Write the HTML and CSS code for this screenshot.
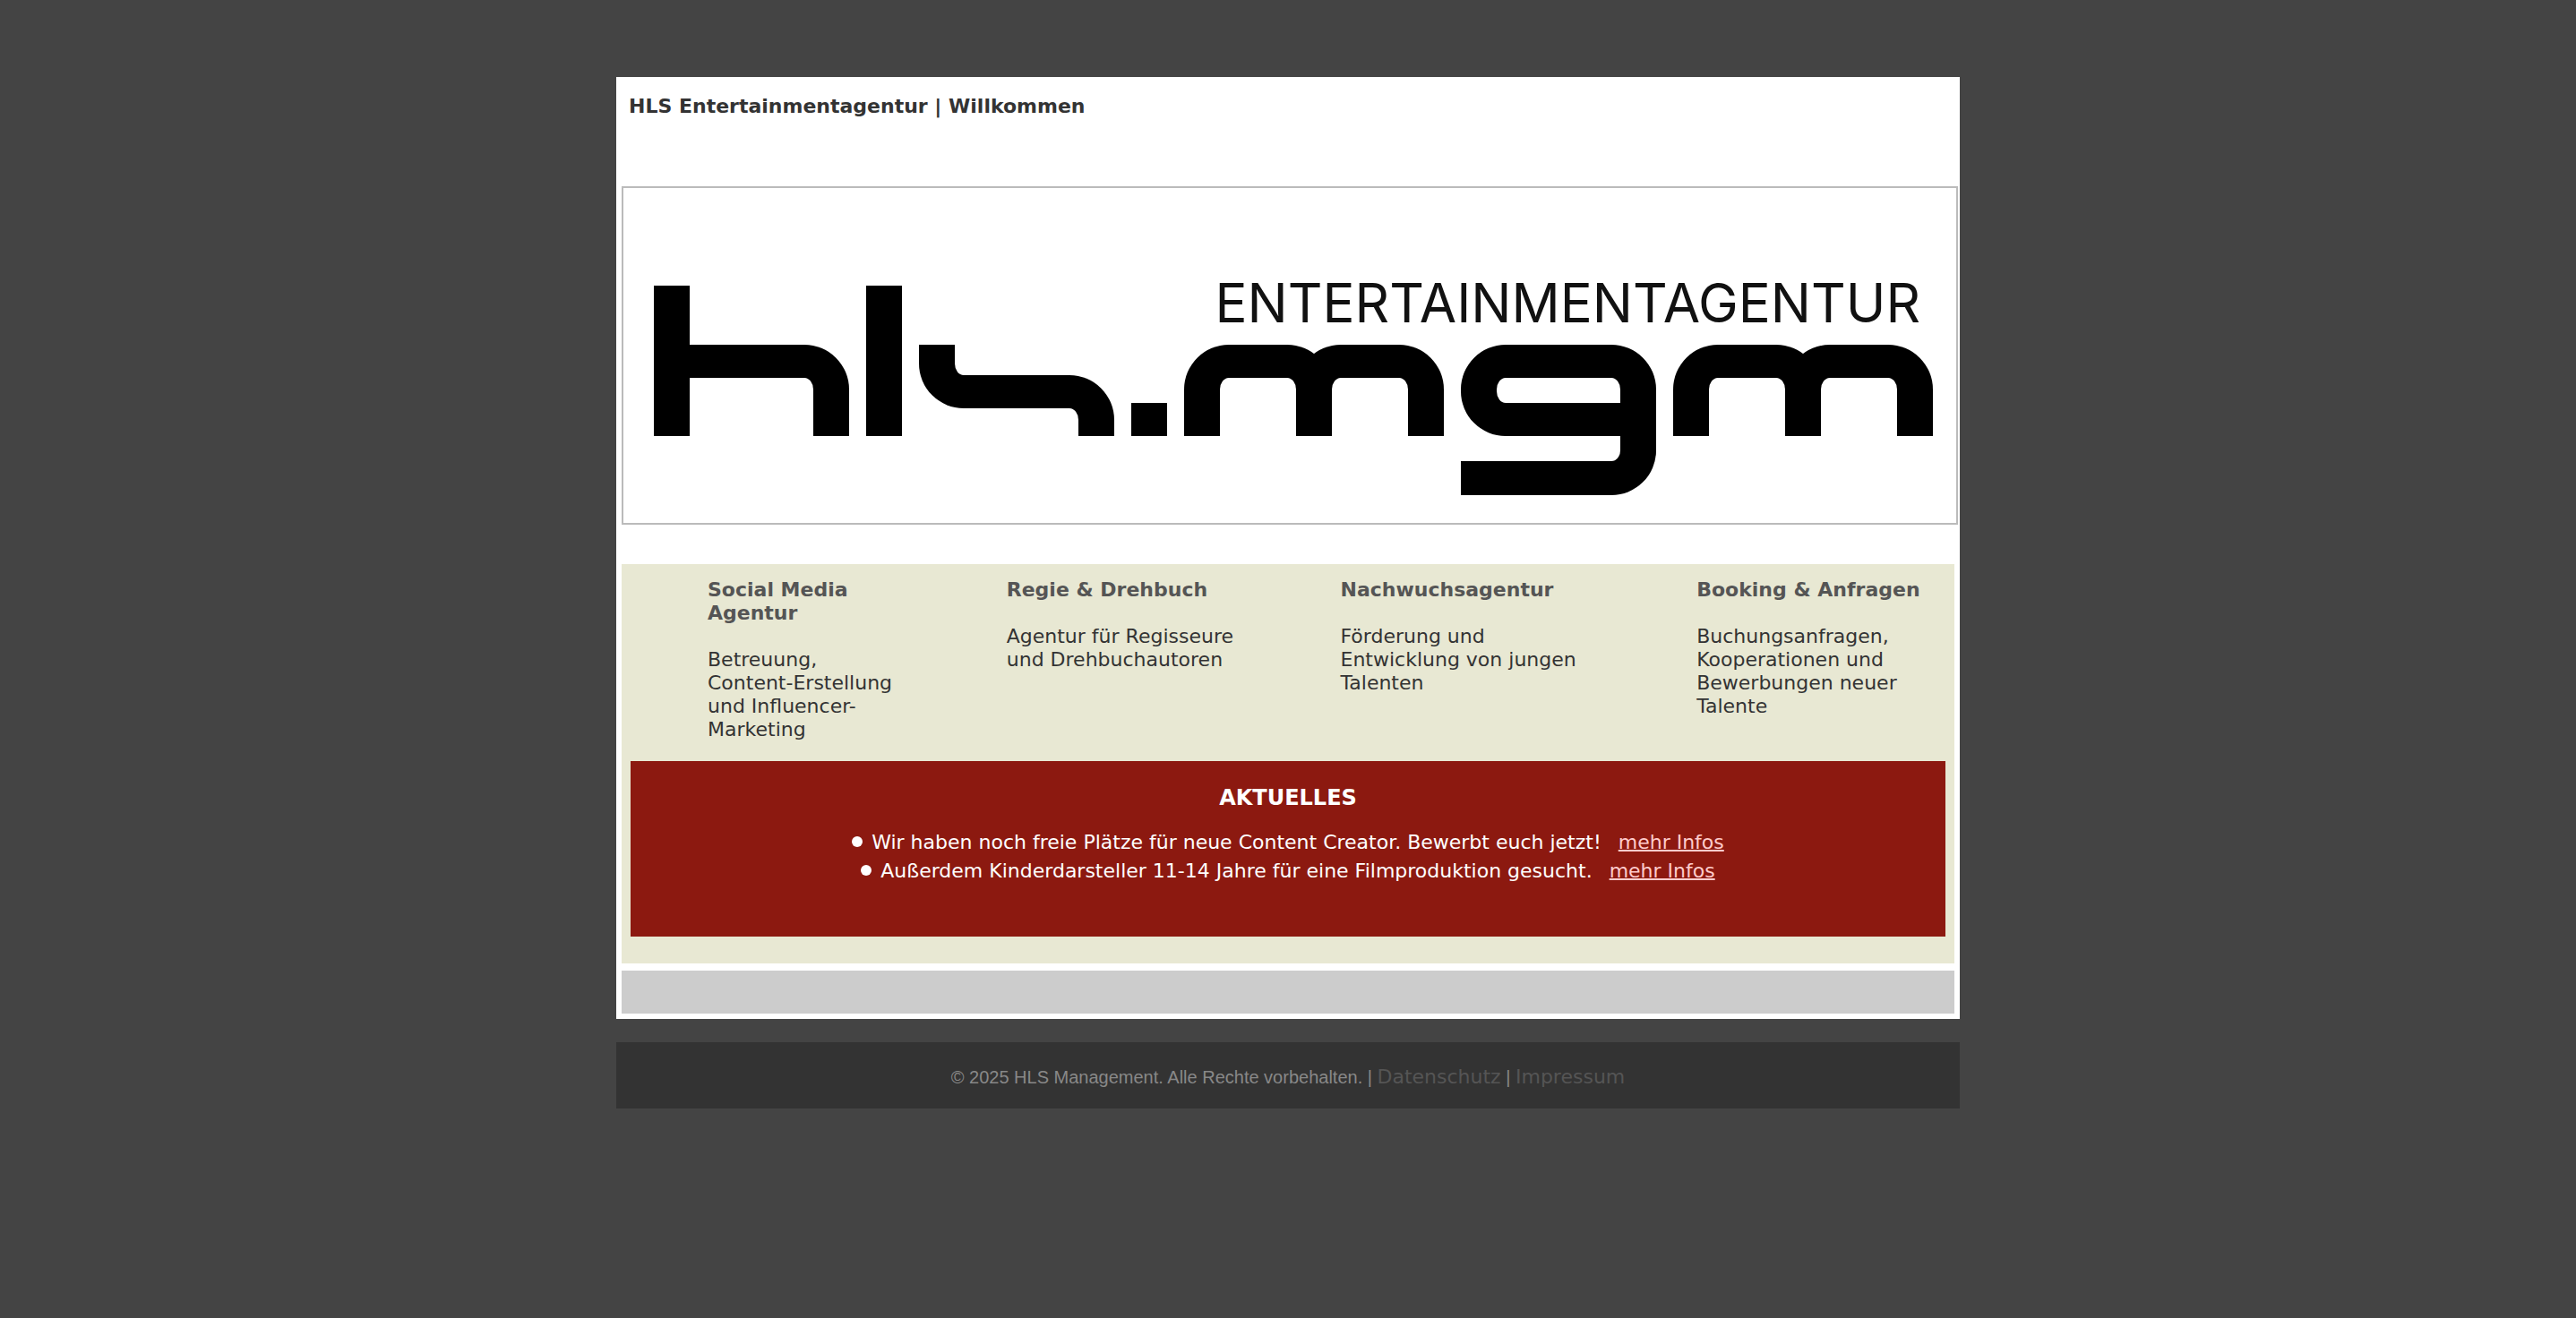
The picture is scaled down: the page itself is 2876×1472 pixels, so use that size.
FILE: index.html
```html
<!DOCTYPE html>
<html lang="de">
<head>
<meta charset="utf-8">
<meta name="viewport" content="width=device-width, initial-scale=1">
<title>HLS Entertainmentagentur | Willkommen</title>
<link rel="stylesheet" href="styles.css">
</head>
<body>
<main class="page">
  <h1 class="page-title">HLS Entertainmentagentur | Willkommen</h1>

  <div class="banner">
    <p class="tagline">ENTERTAINMENTAGENTUR</p>
    <div class="mark" role="img" aria-label="hls.mgm">
      <div class="h"><span class="stem"></span><span class="shoulder"></span></div>
      <span class="stem"></span>
      <div class="s"><span class="hook"></span><span class="bend"></span></div>
      <span class="dot"></span>
      <div class="m"><span class="arch"></span><span class="arch"></span></div>
      <div class="g"><span class="bowl"></span><span class="tail"></span></div>
      <div class="m"><span class="arch"></span><span class="arch"></span></div>
    </div>
  </div>

  <div class="content">
    <div class="services">
      <section class="service narrow">
        <h2>Social Media Agentur</h2>
        <p>Betreuung, Content-Erstellung und Influencer-Marketing</p>
      </section>
      <section class="service">
        <h2>Regie &amp; Drehbuch</h2>
        <p>Agentur für Regisseure und Drehbuchautoren</p>
      </section>
      <section class="service">
        <h2>Nachwuchsagentur</h2>
        <p>Förderung und Entwicklung von jungen Talenten</p>
      </section>
      <section class="service">
        <h2>Booking &amp; Anfragen</h2>
        <p>Buchungsanfragen, Kooperationen und Bewerbungen neuer Talente</p>
      </section>
    </div>

    <section class="news">
      <h2>AKTUELLES</h2>
      <ul>
        <li>Wir haben noch freie Plätze für neue Content Creator. Bewerbt euch jetzt! <a href="#content-creator">mehr Infos</a></li>
        <li>Außerdem Kinderdarsteller 11-14 Jahre für eine Filmproduktion gesucht. <a href="#kinderdarsteller">mehr Infos</a></li>
      </ul>
    </section>
  </div>

  <div class="bar"></div>
</main>

<footer class="footer">© 2025 HLS Management. Alle Rechte vorbehalten. | <a href="#datenschutz">Datenschutz</a> | <a href="#impressum">Impressum</a></footer>
</body>
</html>
```
FILE: styles.css
```css
* {
  box-sizing: border-box;
}

body {
  margin: 0;
  padding: 86px 16px 40px;
  background: #444;
  color: #333;
  font: 22px/26px Verdana, "DejaVu Sans", sans-serif;
}

h1, h2, p, ul {
  margin: 0;
  padding: 0;
}

.page,
.footer {
  max-width: 1500px;
  margin: 0 auto;
}

.page {
  padding: 0 6px 6px;
  background: #fff;
}

.page-title {
  padding: 20px 8px 76px;
  font-size: 22px;
  line-height: 26px;
}

/* Logo banner: the tagline and the mark share one grid cell */
.banner {
  display: grid;
  align-items: start;
  margin-right: -4px;
  padding: 109px 0 31px 34px;
  border: 2px solid #bbb;
  overflow: hidden;
}

.tagline,
.mark {
  grid-area: 1 / 1;
}

.tagline {
  padding-right: 40px;
  color: #111;
  font: 400 60px/38px Inter, sans-serif;
  text-align: right;
}

.mark {
  display: flex;
  gap: 19px;
  color: #000;
}

.mark span {
  display: block;
  flex: none;
  border: 0 solid currentColor;
}

.h,
.s,
.m {
  display: flex;
  align-items: flex-start;
}

.s,
.m,
.g,
.mark .shoulder {
  margin-top: 66px;
}

.mark .stem {
  width: 40px;
  height: 168px;
  background: currentColor;
}

.mark .shoulder {
  width: 178px;
  height: 102px;
  border-width: 37px 40px 0 0;
  border-top-right-radius: 50px;
}

.mark .hook {
  width: 109px;
  height: 71px;
  border-width: 0 0 37px 40px;
  border-bottom-left-radius: 50px;
}

.mark .bend {
  width: 109px;
  height: 68px;
  margin-top: 34px;
  border-width: 37px 40px 0 0;
  border-top-right-radius: 50px;
}

.mark .dot {
  width: 40px;
  height: 37px;
  margin-top: 131px;
  background: currentColor;
}

.mark .arch {
  width: 165px;
  height: 102px;
  border-width: 37px 40px 0;
  border-radius: 50px 50px 0 0;
}

.mark .arch + .arch {
  margin-left: -40px;
}

.mark .bowl {
  width: 218px;
  height: 102px;
  border-width: 37px 40px;
  border-radius: 50px 50px 0 50px;
}

.mark .tail {
  width: 218px;
  height: 66px;
  border-width: 0 40px 38px 0;
  border-bottom-right-radius: 50px;
}

/* Services and news */
.content {
  margin-top: 44px;
  padding: 0 10px 30px;
  background: #e8e8d3;
}

.services {
  display: grid;
  grid-template-columns: 334fr 373fr 398fr 278fr;
  padding: 16px 0 22px 86px;
}

.service {
  max-width: 274px;
}

.service.narrow {
  max-width: 214px;
}

.service h2 {
  margin-bottom: 26px;
  color: #555;
  font-size: 22px;
  line-height: 26px;
}

.news {
  padding: 24px 16px 57px;
  background: #8c1910;
  color: #fff;
  text-align: center;
}

.news h2 {
  margin-bottom: 17px;
  font-size: 24px;
  line-height: 34px;
}

.news ul {
  list-style: none;
  line-height: 32px;
}

.news li::before {
  content: "";
  display: inline-block;
  width: 12px;
  height: 12px;
  margin-right: 10px;
  border-radius: 50%;
  background: currentColor;
  vertical-align: 2px;
}

.news a {
  margin-left: 12px;
  color: #fcc;
  text-decoration-thickness: 2px;
}

.bar {
  height: 48px;
  margin-top: 8px;
  background: #ccc;
}

.footer {
  margin-top: 26px;
  padding: 26px 16px 22px;
  background: #333;
  color: #888;
  font: 20px/26px "Liberation Sans", Arial, sans-serif;
  text-align: center;
}

.footer a {
  color: #555;
  font-family: Verdana, "DejaVu Sans", sans-serif;
  font-size: 22px;
  text-decoration: none;
}
```
